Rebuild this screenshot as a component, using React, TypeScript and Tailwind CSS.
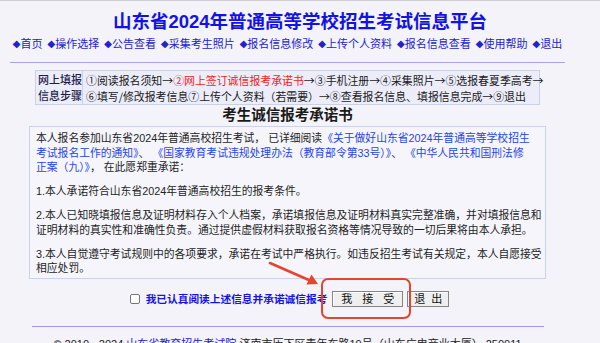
import React from "react";

const FONT = { fontFamily: '"Liberation Sans", "Noto Sans CJK SC", sans-serif' };
const CJK = { fontFamily: '"Noto Sans CJK SC", sans-serif' };

const navItems = ["首页", "操作选择", "公告查看", "采集考生照片", "报名信息修改", "上传个人资料", "报名信息查看", "使用帮助", "退出"];

export default function App() {
  return (
    <div className="relative w-[600px] h-[343px] overflow-hidden bg-[#f3f3f9] border-t border-[#cfcfd8]" style={FONT}>
      {/* Title */}
      <div className="pt-[10px] text-center text-[18.5px] leading-[21px] font-bold text-[#1212e6]">
        山东省2024年普通高等学校招生考试信息平台
      </div>

      <div className="ml-[10px] w-[555px] flex flex-col">
        {/* Nav */}
        <div className="mt-[5px] flex justify-center gap-[5px] text-[11px] leading-[14px] text-[#2323cc] whitespace-nowrap">
          {navItems.map((t) => (
            <span key={t} className="flex items-center">
              <span className="text-[10px]" style={{ fontFamily: '"DejaVu Sans", sans-serif' }}>◆</span>
              <span>{t}</span>
            </span>
          ))}
        </div>

        {/* divider */}
        <div className="mt-[11px] h-px bg-[#a3a3ee]" />

        {/* Steps box */}
        <div className="mt-[7px] mx-auto w-[505px] flex border border-[#c9d0ea] bg-[#ecedf9] text-[11px] leading-[16px] whitespace-nowrap">
          <div className="w-[48px] pt-px pl-[2px] border-r border-[#c9d0ea] text-[#1c1c4a] font-medium">
            网上填报<br />信息步骤
          </div>
          <div className="pt-px pl-[3px] text-[10.9px] text-[#1a1a1a]" style={CJK}>
            ①阅读报名须知→<span className="text-[#f01c1c]">②网上签订诚信报考承诺书</span>→③手机注册→④采集照片→⑤选报春夏季高考→
            <br />
            ⑥填写/修改报考信息⑦上传个人资料（若需要）→⑧查看报名信息、填报信息完成→⑨退出
          </div>
        </div>

        {/* Heading */}
        <div className="mt-px text-center text-[14.5px] leading-[18px] font-bold text-[#1a1a1a]">
          考生诚信报考承诺书
        </div>

        {/* Text box */}
        <div className="mt-[2px] mx-auto w-[517px] h-[153px] border border-[#c6d4ee] bg-[#f5f5fb] px-[6px] pt-[4px] text-[10.8px] leading-[14.5px] text-[#1e1e1e] whitespace-nowrap">
          <p>
            本人报名参加山东省2024年普通高校招生考试， 已详细阅读<span className="text-[#2645e6]">《关于做好山东省2024年普通高等学校招生</span>
            <br />
            <span className="text-[#2645e6]">考试报名工作的通知》</span>、 <span className="text-[#2645e6]">《国家教育考试违规处理办法（教育部令第33号）》</span>、 <span className="text-[#2645e6]">《中华人民共和国刑法修</span>
            <br />
            <span className="text-[#2645e6]">正案（九）》</span>， 在此愿郑重承诺：
          </p>
          <p className="mt-[9.5px]">1.本人承诺符合山东省2024年普通高校招生的报考条件。</p>
          <p className="mt-[9.5px]">
            2.本人已知晓填报信息及证明材料存入个人档案，承诺填报信息及证明材料真实完整准确，并对填报信息和
            <br />
            证明材料的真实性和准确性负责。通过提供虚假材料获取报名资格等情况导致的一切后果将由本人承担。
          </p>
          <p className="mt-[9.5px]">
            3.本人自觉遵守考试规则中的各项要求，承诺在考试中严格执行。如违反招生考试有关规定，本人自愿接受
            <br />
            相应处罚。
          </p>
        </div>

        {/* Checkbox row */}
        <div className="mt-[11px] h-[18px] flex items-center justify-center pl-[4px] whitespace-nowrap">
          <div className="w-[10px] h-[10px] border border-[#767676] rounded-[2px] bg-white" />
          <span className="ml-[6px] text-[10.7px] font-bold text-[#1616e2]">我已认真阅读上述信息并承诺诚信报考</span>
          <div className="ml-[5px] w-[71px] h-[16px] flex items-center justify-center gap-[10px] border border-[#858585] bg-[#efefef] shadow-[inset_1px_1px_0_#ffffff] text-[11px] text-[#111]">
            <span>我</span><span>接</span><span>受</span>
          </div>
          <div className="ml-[4px] w-[42px] h-[16px] flex items-center justify-center gap-[6px] border border-[#858585] bg-[#efefef] shadow-[inset_1px_1px_0_#ffffff] text-[11px] text-[#111]">
            <span>退</span><span>出</span>
          </div>
        </div>

        {/* Footer line */}
        <div className="mt-[18px] mx-auto w-[512px] h-px bg-[#9a9af0]" />

        {/* Footer */}
        <div className="mt-[10px] text-center text-[11px] leading-[14px] text-[#222] whitespace-nowrap">
          © 2010 - 2024 <span className="text-[#1a1ae0] underline">山东省教育招生考试院</span> 济南市历下区青年东路19号（山东广电商业大厦） 250011
        </div>
      </div>

      {/* Annotation overlay */}
      <svg className="absolute left-0 top-0 pointer-events-none" width="600" height="343" viewBox="0 0 600 343">
        <rect x="322" y="278" width="88" height="39" rx="6" ry="6" fill="none" stroke="#e5432d" strokeWidth="2" />
        <line x1="270" y1="262" x2="310" y2="279.5" stroke="#e8432d" strokeWidth="2.5" strokeLinecap="round" />
        <polygon points="318,283 306.5,283.5 311.5,273.5" fill="#e8432d" />
      </svg>
    </div>
  );
}
